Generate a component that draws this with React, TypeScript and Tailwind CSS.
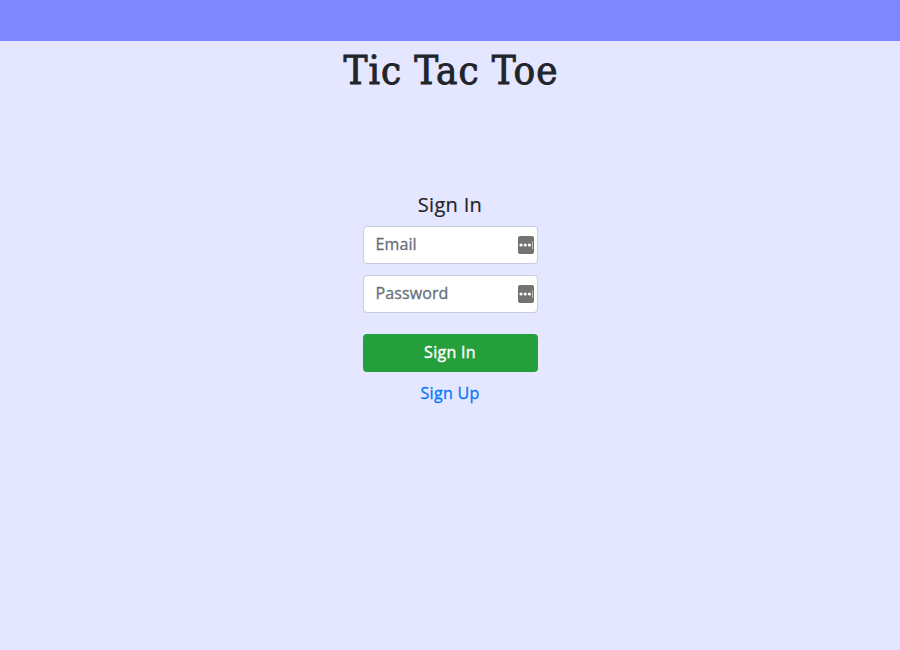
export default function App() {
  return (
    <div className="flex h-[650px] w-[900px] flex-col items-center overflow-hidden bg-[#e5e6ff] font-['Open_Sans','Noto_Sans',sans-serif] font-normal text-[#212529]">
      <header className="h-[41px] w-full shrink-0 bg-[#8086ff]" />
      <h1 className="mt-[5px] mb-px pl-[2px] font-['DejaVu_Serif_Condensed','DejaVu_Serif',serif] text-[40px] leading-[48px] font-normal tracking-[0.9px] [-webkit-text-stroke:0.9px_#212529]">Tic Tac Toe</h1>
      <form className="mt-[98px] flex w-[175px] flex-col">
        <h2 className="mb-[9px] text-center text-[20px] leading-6 tracking-[0.3px] [-webkit-text-stroke:0.2px]">Sign In</h2>
        <Field label="Email" />
        <div className="h-[11px]" />
        <Field label="Password" />
        <button type="button" className="mt-[21px] h-[38px] rounded bg-[#259e3c] pb-[2px] text-base tracking-[0.3px] text-white [-webkit-text-stroke:0.4px]">Sign In</button>
        <a className="mt-[9px] text-center text-base leading-6 tracking-[0.3px] text-[#0077ff] [-webkit-text-stroke:0.3px]">Sign Up</a>
      </form>
    </div>
  );
}

function Field({ label }: { label: string }) {
  return (
    <div className="flex h-[38px] items-center justify-between rounded border border-[#c8ccdc] bg-white pr-[3px] pl-3">
      <span className="pb-[2px] text-base tracking-[0.1px] text-[#66707a] [-webkit-text-stroke:0.3px]">{label}</span>
      <svg width="16" height="18" viewBox="0 0 16 18">
        <rect width="16" height="18" rx="2" fill="#737373" />
        <circle cx="3" cy="9" r="1.6" fill="#fff" />
        <circle cx="7.2" cy="9" r="1.6" fill="#fff" />
        <circle cx="11.4" cy="9" r="1.6" fill="#fff" />
        <path d="M14.5 5.5v7.5" stroke="#d0d0d0" strokeWidth=".8" />
      </svg>
    </div>
  );
}
